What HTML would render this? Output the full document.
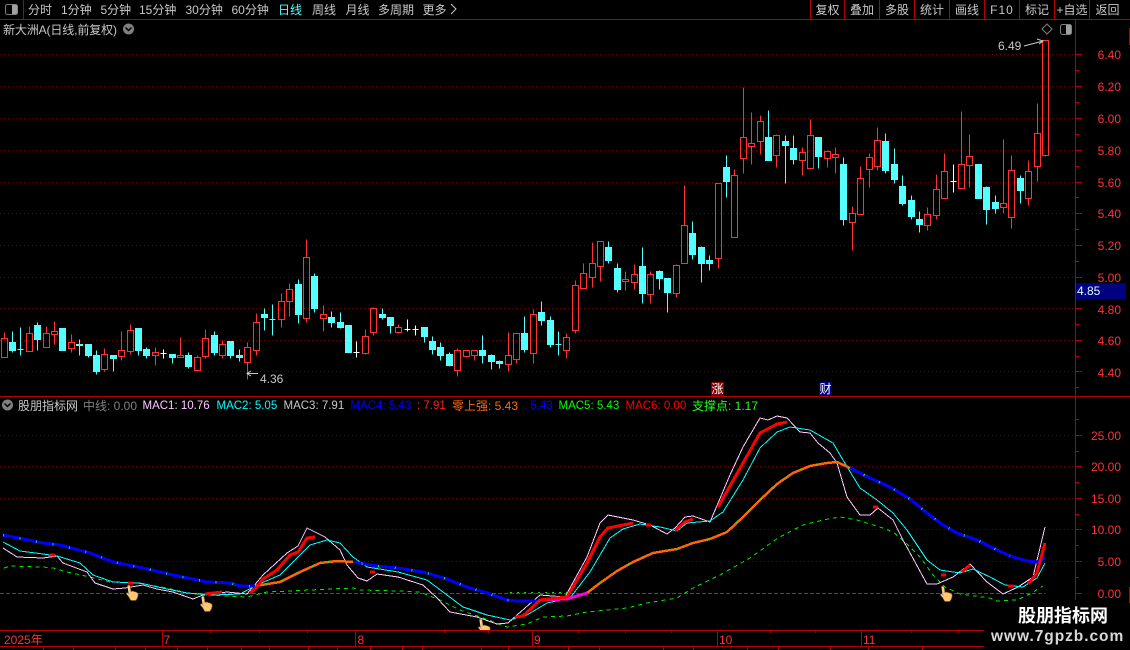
<!DOCTYPE html>
<html lang="zh-CN"><head><meta charset="utf-8"><title>新大洲A</title>
<style>
html,body{margin:0;padding:0;background:#000;width:1130px;height:650px;overflow:hidden}
svg{display:block}
text{font-family:"Liberation Sans","WenQuanYi Zen Hei","Noto Sans CJK SC",sans-serif;font-size:12px}
.t{fill:#c8c8c8}
.a{fill:#ff3232;font-size:12.5px}
.m{font-size:11.5px}
.k{fill:none;stroke-linejoin:round;shape-rendering:crispEdges}
</style></head><body>
<svg xmlns="http://www.w3.org/2000/svg" width="1130" height="650" viewBox="0 0 1130 650">
<rect width="1130" height="650" fill="#000"/>
<!-- grids -->
<path d="M0 54.5H1075M0 86.5H1075M0 118.5H1075M0 150.5H1075M0 182.5H1075M0 213.5H1075M0 245.5H1075M0 277.5H1075M0 308.5H1075M0 340.5H1075M0 371.5H1075M0 435.5H1075M0 466.5H1075M0 498.5H1075M0 529.5H1075M0 561.5H1075" stroke="#6a0000" stroke-width="1" stroke-dasharray="1 3" fill="none"/>
<path d="M0 593.5H1045" stroke="#dd1111" stroke-width="1" stroke-dasharray="4 2" fill="none"/>
<!-- frames -->
<path d="M0 19.5H1130M0 396.5H1130M1075.5 19V600M23.5 0V19M810.5 0V19M844.5 0V19M879.5 0V19M914.5 0V19M949.5 0V19M984.5 0V19M1019.5 0V19M1054.5 0V19M1089.5 0V19M0 630.5H984M0 646.5H984M162.5 630V646M355.5 630V646M532.5 630V646M717.5 630V646M861.5 630V646" stroke="#b40000" stroke-width="1" fill="none"/>
<path d="M1075 54.5h7M1075 70.5h4M1075 86.5h7M1075 102.5h4M1075 118.5h7M1075 134.5h4M1075 150.5h7M1075 166.5h4M1075 182.5h7M1075 197.5h4M1075 213.5h7M1075 229.5h4M1075 245.5h7M1075 261.5h4M1075 277.5h7M1075 293.5h4M1075 308.5h7M1075 324.5h4M1075 340.5h7M1075 356.5h4M1075 371.5h7M1075 387.5h4M1075 419.5h4M1075 435.5h7M1075 451.5h4M1075 466.5h7M1075 482.5h4M1075 498.5h7M1075 514.5h4M1075 529.5h7M1075 545.5h4M1075 561.5h7M1075 577.5h4M1075 593.5h7M1129.5 28V45M1129.5 587V603M210.5 630v3M259.5 630v3M307.5 630v3M444.5 630v3M488.5 630v3M578.5 630v3M625.5 630v3M671.5 630v3M770.5 630v3M815.5 630v3M911.5 630v3M958.5 630v3M43.5 646v4M73.5 646v4M115.5 646v4M145.5 646v4M177.5 646v4M207.5 646v4M241.5 646v4M269.5 646v4M308.5 646v4M337.5 646v4M370.5 646v4M402.5 646v4M422.5 646v4M481.5 646v4M508.5 646v4M568.5 646v4M599.5 646v4M663.5 646v4M693.5 646v4M747.5 646v4M778.5 646v4M830.5 646v4M868.5 646v4M922.5 646v4" stroke="#b40000" stroke-width="1" fill="none"/>
<!-- candles -->
<g transform="translate(0 .5)" stroke-width="1">
<path fill="none" stroke="#ff3232" d="M4.5 332V338M4.5 357V357M1.5 338h6V357h-6zM29.5 326V333M26.5 333h6V351h-6zM46.5 326V333M43.5 333h6V347h-6zM54.5 321V331M54.5 334V344M51.5 331h6V334h-6zM71.5 334V342M71.5 348V352M68.5 342h6V348h-6zM104.5 348V354M104.5 369V371M101.5 354h6V369h-6zM121.5 331V350M121.5 356V360M118.5 350h6V356h-6zM130.5 324V330M130.5 351V354M127.5 330h6V351h-6zM155.5 347V352M155.5 355V365M152.5 352h6V355h-6zM180.5 337V355M177.5 355h6V357h-6zM197.5 355V357M197.5 370V371M194.5 357h6V370h-6zM205.5 329V338M205.5 356V358M202.5 338h6V356h-6zM222.5 340V344M222.5 355V358M219.5 344h6V355h-6zM247.5 342V347M247.5 362V379M244.5 347h6V362h-6zM256.5 313V322M256.5 350V355M253.5 322h6V350h-6zM281.5 293V301M281.5 319V327M278.5 301h6V319h-6zM289.5 283V289M289.5 301V316M286.5 289h6V301h-6zM306.5 239V257M306.5 318V322M303.5 257h6V318h-6zM323.5 305V314M323.5 318V331M320.5 314h6V318h-6zM365.5 329V336M365.5 353V354M362.5 336h6V353h-6zM373.5 307V308M373.5 332V335M370.5 308h6V332h-6zM398.5 324V327M398.5 332V333M395.5 327h6V332h-6zM457.5 348V350M457.5 370V376M454.5 350h6V370h-6zM466.5 356V357M463.5 350h6V356h-6zM474.5 355V360M471.5 350h6V355h-6zM508.5 332V355M508.5 364V371M505.5 355h6V364h-6zM516.5 359V363M513.5 333h6V359h-6zM533.5 309V314M533.5 353V363M530.5 314h6V353h-6zM566.5 333V337M566.5 350V358M563.5 337h6V350h-6zM575.5 280V285M575.5 330V333M572.5 285h6V330h-6zM583.5 263V273M580.5 273h6V288h-6zM592.5 242V263M592.5 277V287M589.5 263h6V277h-6zM600.5 266V281M597.5 241h6V266h-6zM625.5 271V279M625.5 281V290M622.5 279h6V281h-6zM634.5 264V274M634.5 282V289M631.5 274h6V282h-6zM650.5 271V274M650.5 294V303M647.5 274h6V294h-6zM676.5 264V265M676.5 293V297M673.5 265h6V293h-6zM684.5 185V225M681.5 225h6V263h-6zM718.5 258V268M715.5 183h6V258h-6zM734.5 169V175M731.5 175h6V237h-6zM743.5 87V137M743.5 158V173M740.5 137h6V158h-6zM751.5 112V143M751.5 146V164M748.5 143h6V146h-6zM760.5 115V121M760.5 141V154M757.5 121h6V141h-6zM776.5 134V135M776.5 155V167M773.5 135h6V155h-6zM802.5 147V152M802.5 160V175M799.5 152h6V160h-6zM810.5 119V135M807.5 135h6V168h-6zM827.5 150V151M827.5 158V167M824.5 151h6V158h-6zM835.5 147V154M835.5 157V173M832.5 154h6V157h-6zM852.5 206V213M852.5 222V250M849.5 213h6V222h-6zM860.5 166V178M857.5 178h6V214h-6zM869.5 153V157M869.5 169V187M866.5 157h6V169h-6zM877.5 127V140M877.5 166V170M874.5 140h6V166h-6zM927.5 207V214M927.5 225V230M924.5 214h6V225h-6zM936.5 174V189M936.5 215V219M933.5 189h6V215h-6zM944.5 153V171M941.5 171h6V198h-6zM961.5 111V164M958.5 164h6V188h-6zM969.5 134V156M969.5 165V187M966.5 156h6V165h-6zM1003.5 139V203M1003.5 207V213M1000.5 203h6V207h-6zM1011.5 155V170M1011.5 217V228M1008.5 170h6V217h-6zM1028.5 160V171M1028.5 198V205M1025.5 171h6V198h-6zM1037.5 103V133M1037.5 166V181M1034.5 133h6V166h-6zM1045.5 155V156M1042.5 40h6V155h-6z"/>
<path fill="#54ffff" stroke="#54ffff" d="M12.5 331V352M9.5 342h6V350h-6zM20.5 327V355M17.5 349h6zM37.5 322V350M34.5 325h6V339h-6zM59.5 328h6V350h-6zM79.5 339V355M76.5 344h6V345h-6zM88.5 344V357M85.5 344h6V355h-6zM96.5 350V374M93.5 355h6V371h-6zM113.5 355V371M110.5 355h6V358h-6zM138.5 328V355M135.5 328h6V350h-6zM146.5 347V358M143.5 349h6V355h-6zM172.5 354V363M169.5 354h6V357h-6zM188.5 352V368M185.5 355h6V366h-6zM214.5 331V355M211.5 335h6V352h-6zM230.5 341V358M227.5 341h6V355h-6zM239.5 349V361M236.5 355h6V357h-6zM264.5 308V330M261.5 314h6V317h-6zM272.5 304V335M269.5 319h6zM298.5 279V323M295.5 284h6V314h-6zM314.5 273V312M311.5 276h6V308h-6zM331.5 311V327M328.5 317h6V322h-6zM340.5 312V328M337.5 322h6V327h-6zM345.5 325h6V352h-6zM382.5 308V319M379.5 314h6V317h-6zM390.5 317V333M387.5 317h6V325h-6zM424.5 327V342M421.5 327h6V336h-6zM432.5 336V354M429.5 341h6V349h-6zM440.5 342V360M437.5 347h6V355h-6zM449.5 352V366M446.5 354h6V365h-6zM482.5 335V363M479.5 350h6V355h-6zM491.5 354V369M488.5 355h6V361h-6zM499.5 360V368M496.5 361h6V363h-6zM524.5 316V352M521.5 333h6V349h-6zM541.5 301V325M538.5 312h6V320h-6zM550.5 316V347M547.5 320h6V344h-6zM558.5 331V355M555.5 344h6zM608.5 241V263M605.5 247h6V260h-6zM617.5 263V292M614.5 268h6V289h-6zM642.5 247V303M639.5 266h6V293h-6zM659.5 270V289M656.5 271h6V278h-6zM667.5 278V312M664.5 278h6V292h-6zM692.5 221V259M689.5 233h6V254h-6zM701.5 246V282M698.5 247h6V263h-6zM709.5 255V270M706.5 260h6V263h-6zM726.5 155V197M723.5 167h6V181h-6zM768.5 110V160M765.5 137h6V160h-6zM785.5 135V183M782.5 141h6V145h-6zM793.5 135V164M790.5 148h6V159h-6zM818.5 137V168M815.5 137h6V156h-6zM843.5 157V225M840.5 164h6V219h-6zM885.5 133V173M882.5 141h6V170h-6zM894.5 148V183M891.5 164h6V179h-6zM902.5 175V205M899.5 186h6V203h-6zM911.5 195V219M908.5 200h6V216h-6zM919.5 211V232M916.5 219h6V224h-6zM975.5 164h6V198h-6zM986.5 186V224M983.5 187h6V209h-6zM995.5 195V213M992.5 202h6V208h-6zM1020.5 175V203M1017.5 178h6V190h-6z"/>
<path fill="none" stroke="#fff" d="M163.5 349V358M160.5 353h6M356.5 341V357M353.5 352h6M407.5 319V331M404.5 329h6M415.5 325V335M412.5 329h6M953.5 164V192M950.5 181h6"/>
</g>
<!-- price marks -->
<path d="M1024 46L1043 41M1037 39L1043 41L1039 44M258 373.5H247M251 371L247 373.5L251 376" stroke="#c8c8c8" fill="none"/>
<text x="998" y="50" class="t">6.49</text>
<text x="260" y="383" class="t">4.36</text>
<!-- top bar -->
<rect x="5.5" y="4.5" width="12" height="10" rx="2" fill="none" stroke="#808080"/><rect x="12" y="5" width="5" height="9" fill="#a0a0a0"/>
<g class="t">
<text x="28" y="14">分时</text><text x="61" y="14">1分钟</text><text x="100.500" y="14">5分钟</text><text x="139" y="14">15分钟</text><text x="185.500" y="14">30分钟</text><text x="231.500" y="14">60分钟</text>
<text x="278" y="14" style="fill:#54ffff">日线</text><text x="312" y="14">周线</text><text x="345.500" y="14">月线</text><text x="378" y="14">多周期</text><text x="422.500" y="14">更多</text>
</g>
<path d="M451 4L456 9L451 14" stroke="#c8c8c8" fill="none"/>
<g class="t" text-anchor="middle">
<text x="827.500" y="14">复权</text><text x="862" y="14">叠加</text><text x="897" y="14">多股</text><text x="932" y="14">统计</text><text x="967" y="14">画线</text><text x="1002" y="14" letter-spacing="1">F10</text><text x="1037" y="14">标记</text><text x="1072" y="14">+自选</text><text x="1107.500" y="14">返回</text>
</g>
<text x="3" y="34" class="t" letter-spacing="-.12">新大洲A(日线,前复权)</text>
<circle cx="128.500" cy="29" r="5.500" fill="#808080"/><path d="M125.500 27.500L128.500 30.500L131.500 27.500" stroke="#000" stroke-width="1.500" fill="none"/>
<path d="M1047 24l5 5l-5 5l-5-5z" fill="none" stroke="#808080"/>
<rect x="1060.500" y="24.500" width="11" height="10" rx="2" fill="none" stroke="#808080"/><rect x="1066" y="25" width="5" height="9" fill="#a0a0a0"/>
<!-- axis labels -->
<g class="a" text-anchor="end">
<text x="1121" y="59">6.40</text><text x="1121" y="91">6.20</text><text x="1121" y="123">6.00</text><text x="1121" y="155">5.80</text><text x="1121" y="187">5.60</text><text x="1121" y="218">5.40</text><text x="1121" y="250">5.20</text><text x="1121" y="282">5.00</text><text x="1121" y="314">4.80</text><text x="1121" y="345">4.60</text><text x="1121" y="377">4.40</text>
<text x="1121" y="440">25.00</text><text x="1121" y="471">20.00</text><text x="1121" y="503">15.00</text><text x="1121" y="534">10.00</text><text x="1121" y="566">5.00</text><text x="1121" y="598">0.00</text>
</g>
<rect x="1076" y="283" width="50" height="16" fill="#000080"/>
<text x="1077" y="295" style="fill:#d8ffff">4.85</text>
<!-- badges -->
<rect x="711" y="382" width="13" height="14" fill="#800000"/><text x="711.500" y="393" style="fill:#fff">涨</text>
<rect x="819" y="382" width="13" height="14" fill="#000080"/><text x="819.500" y="393" style="fill:#fff">财</text>
<!-- legend -->
<circle cx="7.500" cy="405" r="5.500" fill="#808080"/><path d="M4.500 403.500L7.500 406.500L10.500 403.500" stroke="#000" stroke-width="1.500" fill="none"/>
<text x="18" y="410" class="t">股朋指标网</text>
<text x="83" y="410" style="fill:#808080">中线: 0.00</text>
<text x="142.500" y="409" class="m" style="fill:#ffc8ff">MAC1: 10.76</text>
<text x="216.500" y="409" class="m" style="fill:#00ffff">MAC2: 5.05</text>
<text x="283.500" y="409" class="m t">MAC3: 7.91</text>
<text x="350.500" y="409" class="m" style="fill:#0000ff">MAC4: 5.43</text>
<text x="417" y="409" class="m" style="fill:#ff2020">: 7.91</text>
<text x="452" y="410" style="fill:#ff6a10">零上强: 5.43</text>
<text x="524" y="409" class="m" style="fill:#0000ff">: 5.43</text>
<text x="558.500" y="409" class="m" style="fill:#00ff00">MAC5: 5.43</text>
<text x="625.500" y="409" class="m" style="fill:#ff0000">MAC6: 0.00</text>
<text x="692" y="410" style="fill:#20ff20">支撑点: 1.17</text>
<!-- indicator lines -->
<g class="k">
<path stroke="#00e800" stroke-width="1" stroke-dasharray="4 4" d="M4 568L10 566L43 567L53 568L67 572L90 577L110 582L137 583L167 588L187 593L207 595L247 597L267 592L290 591L320 589.500L353 588L360 590L400 591L420 592L440 600L460 610L483 618L507 627L527 624L543 617L567 616L587 612L627 608L647 603L677 598L693 588L720 575L750 558L778 538L803 525L823 520L840 517L857 520L880 527L893 532L905 542L920 557L933 575L945 587L960 594L990 598L997 601L1017 600L1030 594L1043 586"/>
<path stroke="#00e800" stroke-width="1" stroke-dasharray="2 5" d="M510 592.500H570"/>
<path stroke="#ffc8ff" stroke-width="1" d="M3 548L17 557L43 558L57 556L63 563L87 572L95 583L113 589L125 588L143 585L157 589L173 592L193 599L203 595L227 592L247 594L263 575L287 553L298 546L307 528L325 537L340 550L347 565L358 578L367 581L377 574L398 577L423 585L437 598L450 612L477 617L497 624L508 623L517 615L540 595L565 597L587 557L600 523L608 515L633 520L650 525L667 534L675 528L685 517L693 516L710 522L730 475L743 447L760 418L768 420L777 416L787 418L800 432L810 433L818 443L830 453L837 463L847 497L860 515L870 515L878 508L893 520L903 540L927 584L937 584L953 577L970 564L987 582L1003 594L1018 587L1033 577L1045 527"/>
<path stroke="#00ffff" stroke-width="1" d="M3 542L20 551L43 554L57 556L80 563L93 575L113 582L140 583L167 589L187 593L213 595L240 594L257 585L280 575L297 558L310 545L327 540L340 543L353 557L367 567L398 572L427 580L443 592L463 607L487 615L510 620L527 615L547 603L570 598L590 572L610 538L623 529L640 524L660 527L677 531L687 523L710 521L723 512L743 480L760 448L777 432L790 427L810 430L833 443L843 460L860 488L877 500L893 513L907 530L927 560L940 570L960 573L973 569L990 577L1005 585L1023 587L1037 578L1045 563"/>
<path stroke="#0000ff" stroke-width="3" d="M3 535L43 543L60 545L90 553L113 562L143 568L173 575L207 582L230 583L240 586L255 586M353 562L377 566L398 568L423 572L447 579L467 587L487 593L507 600L517 601L540 601M850 468L868 477L890 487L910 499L927 513L943 525L957 533L977 540L993 548L1010 556L1027 561L1037 562L1045 558"/>
<path stroke="#ff6600" stroke-width="2.500" d="M255 586L280 582L300 572L320 563L337 561L353 562M587 593L600 583L617 571L633 562L653 553L677 549L693 543L710 539L727 532L743 517L760 500L777 484L793 473L810 466L827 463L837 462L850 468"/>
<path stroke="#ff00e0" stroke-width="3" d="M540 600L567 599L587 593"/>
<path stroke="#20e020" stroke-width="2.500" stroke-linecap="butt" stroke-dasharray="1 15.800" d="M3 535L43 543L60 545L90 553L113 562L143 568L173 575L207 582L230 583L240 586L255 586L280 582L300 572L320 563L337 561L353 562L377 566L398 568L423 572L447 579L467 587L487 593L507 600L517 601M600 583L617 571L633 562L653 553L677 549L693 543L710 539L727 532L743 517L760 500L777 484L793 473L810 466L827 463L837 462L850 468L868 477L890 487L910 499L927 513L943 525L957 533L977 540L993 548L1010 556"/>
<path stroke="#ff0000" stroke-width="3" d="M250 593L257 587L263 579L277 570L290 555L298 552L307 538L315 537M205 594L222 592M515 617L523 616L540 600L567 597L587 563L600 537L608 528L633 523M675 531L685 522L693 519M718 507L760 433L777 424L787 422M962 572L970 565M1028 584L1037 573L1045 543"/>
<path stroke="#ff0000" stroke-width="3" stroke-linecap="butt" d="M50 555h5M128 583h5M370 572h5M646 525h5M873 507h5M941 575h5M1008 586h5"/>
</g>
<!-- hand cursors -->
<defs><g id="h"><path d="M1.500 0.500C2.500-.3 4 0 4.200 1L5 6.500L6.500 6L8 6.500L9.500 6.800L11 7.500C12 8 12.500 9 12 11C11.500 13 10.500 15 9.500 15.500L5 15.500C4 15 3.500 13 2.500 11.500L.5 9C0 8 1 7.500 2 8L3 9L2 4z" fill="#ffc870" stroke="#7a4a10" stroke-width=".6"/><path d="M1.800 1L3 9M1 8.500L3 11" stroke="#fff" stroke-width=".5" fill="none"/></g></defs>
<use href="#h" x="126" y="585"/><use href="#h" x="200" y="596"/><use href="#h" x="940" y="586"/>
<svg x="478" y="619" width="14" height="11" viewBox="0 0 14 11" overflow="hidden"><use href="#h"/></svg>
<!-- date axis -->
<text x="4" y="644" style="fill:#ff3232">2025年</text><text x="163.500" y="644" style="fill:#ff3232">7</text><text x="357.500" y="644" style="fill:#ff3232">8</text><text x="534" y="644" style="fill:#ff3232">9</text><text x="719" y="644" style="fill:#ff3232">10</text><text x="863" y="644" style="fill:#ff3232">11</text>
<!-- watermark -->
<rect x="984" y="603" width="146" height="47" fill="#000"/>
<text x="1018" y="622" style="font-size:18px;font-weight:700;fill:#fff">股朋指标网</text>
<text x="991" y="641" style="font-size:15.500px;font-weight:700;fill:#d8d8d8;letter-spacing:.95px">www.7gpzb.com</text>
</svg>
</body></html>
